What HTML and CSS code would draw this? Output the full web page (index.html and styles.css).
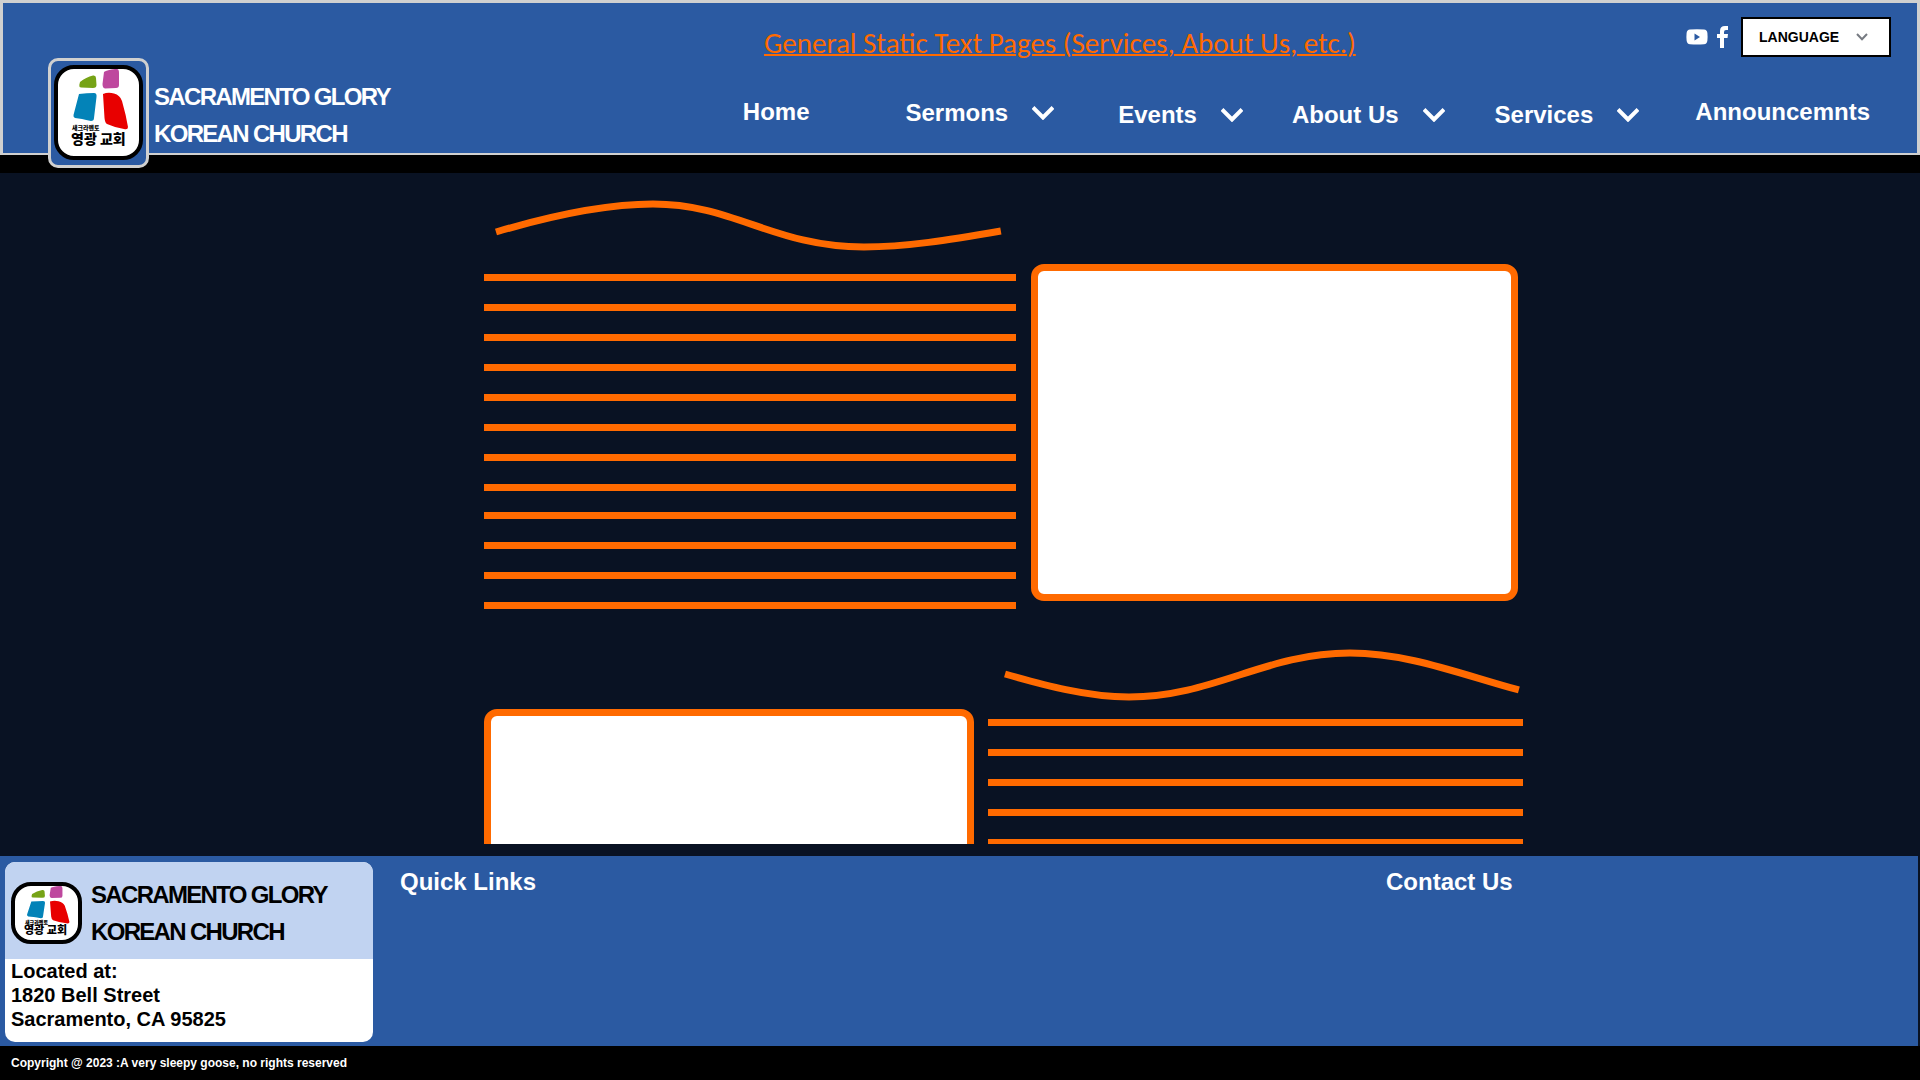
FILE: index.html
```html
<!DOCTYPE html>
<html lang="en">
<head>
<meta charset="utf-8">
<title>Sacramento Glory Korean Church</title>
<link rel="stylesheet" href="styles.css">
</head>
<body>
<svg class="defs" aria-hidden="true">
  <symbol id="cross" viewBox="0 0 81 87" preserveAspectRatio="none">
    <path fill="#76a316" d="M22 13Q28 8 35 6.500Q38 6 38 9L38.500 16Q38.500 19 35 19L23 18.500Q21 18.500 21.300 16Z"/>
    <path fill="#be489e" d="M46 3Q49 1 57 0L59 0Q61 0 61 4V16Q61 19 58 19L47 19.500Q44.500 19 44.500 15Z"/>
    <path fill="#0383b8" d="M21 25Q29 24 36 24Q39 24 38.500 28L36 49Q36 52 33 52Q28 51 24 50L17 49Q15 48 15.500 46Z"/>
    <path fill="#e80000" d="M45 25Q50 23 56 24.500Q62 26 64 32Q68 46 70 58Q70 61 66 60Q58 59 49 55Q47 54 46.500 49Z"/>
  </symbol>
</svg>

<header class="header">
  <a class="logo" href="#" aria-label="Sacramento Glory Korean Church home">
    <span class="logo-tile">
      <svg class="logo-art" viewBox="0 0 81 87">
        <use href="#cross" width="81" height="87"/>
        <text class="logo-small" x="14" y="61">새크라멘토</text>
        <text class="logo-name" x="13" y="75">영광 교회</text>
      </svg>
    </span>
  </a>
  <p class="brand">SACRAMENTO GLORY<br>KOREAN CHURCH</p>
  <div class="header-main">
    <div class="topbar">
      <a class="page-title" href="#">General Static Text Pages (Services, About Us, etc.)</a>
      <div class="tools">
        <a href="#" aria-label="YouTube"><svg width="22" height="16" viewBox="0 0 22 16"><path fill="#fff" d="M4 .6Q11 0 18 .6Q21 1 21.400 4Q21.800 8 21.400 11.500Q21 15 18 15.200Q11 15.800 4 15.200Q1 15 .6 11.500Q.2 8 .6 4Q1 1 4 .6Z"/><path fill="#2b5aa2" d="M8.500 4.500V11.500L14 8Z"/></svg></a>
        <a href="#" aria-label="Facebook"><svg width="12" height="22" viewBox="0 0 12 22"><path fill="#fff" d="M3 22V12H0V8H3V5Q3 0 8 0H11V4H9Q7 4 7 6V8H11L10.500 12H7V22Z"/></svg></a>
        <div class="language">
          <select aria-label="Language"><option>LANGUAGE</option></select>
          <svg class="language-arrow" width="12" height="8" viewBox="0 0 12 8"><path d="M1 1L6 6.200L11 1"/></svg>
        </div>
      </div>
    </div>
    <nav class="nav">
      <a href="#">Home</a>
      <button class="sermons" type="button">Sermons <svg class="chevron" viewBox="0 0 22 14"><path d="M1 1.500L11 11.500L21 1.500"/></svg></button>
      <button class="events" type="button">Events <svg class="chevron" viewBox="0 0 22 14"><path d="M1 1.500L11 11.500L21 1.500"/></svg></button>
      <button type="button">About Us <svg class="chevron" viewBox="0 0 22 14"><path d="M1 1.500L11 11.500L21 1.500"/></svg></button>
      <button type="button">Services <svg class="chevron" viewBox="0 0 22 14"><path d="M1 1.500L11 11.500L21 1.500"/></svg></button>
      <a href="#">Announcemnts</a>
    </nav>
  </div>
</header>

<main class="main">
  <section class="row">
    <div class="copy">
      <svg class="wave" viewBox="0 0 532 60"><path d="M12 35C66 19 121 7 169 7C250 7 290 50 380 50C422 50 465 43 517 34"/></svg>
      <div class="lines"><hr><hr><hr><hr><hr><hr><hr><hr></div>
      <div class="lines"><hr><hr><hr><hr></div>
    </div>
    <div class="photo"></div>
  </section>
  <section class="row row-second">
    <div class="photo"></div>
    <div class="copy">
      <svg class="wave" viewBox="0 0 535 60"><path d="M17 29C56 40 99 52 141 52C226 52 277 8 362 8C420 8 472 29 531 45"/></svg>
      <div class="lines"><hr><hr><hr><hr><hr><hr><hr><hr></div>
    </div>
  </section>
</main>

<footer class="footer">
  <div class="card">
    <div class="card-head">
      <span class="logo-tile">
        <svg class="logo-art" viewBox="0 0 63 54">
          <use href="#cross" width="63" height="54"/>
          <text class="logo-small" x="10" y="38">새크라멘토</text>
          <text class="logo-name" x="9" y="48">영광 교회</text>
        </svg>
      </span>
      <p class="brand">SACRAMENTO GLORY<br>KOREAN CHURCH</p>
    </div>
    <address>Located at:<br>1820 Bell Street<br>Sacramento, CA 95825</address>
  </div>
  <h2>Quick Links</h2>
  <h2>Contact Us</h2>
</footer>
<p class="copyright">Copyright @ 2023 :A very sleepy goose, no rights reserved</p>
</body>
</html>
```
FILE: styles.css
```css
* { box-sizing: border-box; }

body {
  margin: 0;
  height: 100vh;
  display: flex;
  flex-direction: column;
  overflow: hidden;
  background: #091223;
  color: #fff;
  font-family: "Liberation Sans", Arial, sans-serif;
  font-weight: bold;
}

a { color: inherit; text-decoration: none; }
p, h2 { margin: 0; }
svg { display: block; }
.defs { position: absolute; width: 0; height: 0; }

.header {
  display: flex;
  background: #2b5aa2;
  border: 3px solid #d0d0d0;
  border-bottom-width: 2px;
  box-shadow: 0 18px #000;
  margin-bottom: 18px;
  height: 155px;
  padding-left: 45px;
  flex: none;
}

.logo {
  flex: none;
  width: 101px;
  height: 110px;
  margin-top: 55px;
  padding: 4px 3px;
  border: 3px solid #d0d0d0;
  border-radius: 10px;
  background: #2b5aa2;
}
.logo-tile {
  display: block;
  flex: none;
  width: 89px;
  height: 95px;
  border: 4px solid #000;
  border-radius: 20px;
  background: #fff;
  overflow: hidden;
}
.logo-art {
  width: 100%;
  height: 100%;
  font-family: "Noto Sans CJK KR", sans-serif;
  font-weight: 900;
}
.logo-small { font-size: 6px; }
.logo-name { font-size: 14px; }

.brand {
  font-size: 24px;
  line-height: 37px;
  letter-spacing: -0.07em;
  white-space: nowrap;
}
.header .brand { margin: 75px 0 0 5px; width: 242px; }

.header-main { flex: 1; min-width: 0; }
.topbar {
  display: flex;
  justify-content: flex-end;
  height: 78px;
  padding: 14px 26px 0 0;
}
.page-title {
  margin: 8px auto 0 368px;
  color: #ff6a00;
  font: 400 29px/36px Carlito, Calibri, Lato, sans-serif;
  text-decoration: underline;
  text-decoration-thickness: 2px;
  white-space: nowrap;
}
.tools {
  display: flex;
  align-items: center;
  align-self: flex-start;
  gap: 9px;
}
.language { position: relative; margin-left: 3px; }
.language select {
  appearance: none;
  display: block;
  width: 150px;
  height: 40px;
  padding: 0 16px;
  border: 2px solid #000;
  border-radius: 0;
  background: #fff;
  color: #000;
  font: bold 14px "Liberation Sans", Arial, sans-serif;
}
.language-arrow {
  position: absolute;
  right: 23px;
  top: 16px;
  pointer-events: none;
}
.language-arrow path { fill: none; stroke: #777b82; stroke-width: 2; }

.nav {
  display: flex;
  justify-content: flex-end;
  gap: 50px;
  padding-right: 47px;
  font-size: 24px;
  line-height: 28px;
  padding-top: 17px;
}
.nav a { height: 28px; }
.nav a:last-child { margin-left: 6px; }
.nav button {
  display: flex;
  align-items: center;
  gap: 24px;
  height: 28px;
  margin-top: 3px;
  padding: 0;
  border: 0;
  background: none;
  color: inherit;
  font: inherit;
}
.nav .sermons { margin: 1px 0 0 46px; }
.nav .events { margin-left: 14px; margin-right: -1px; }
.chevron { width: 22px; height: 14px; }
.chevron path { fill: none; stroke: #fff; stroke-width: 4; }

.main {
  flex: 1;
  min-height: 0;
  overflow: hidden;
  margin-bottom: 12px;
  padding: 24px 20.7% 0 25.2%;
}
.row {
  display: grid;
  grid-template-columns: 532fr 492fr;
  gap: 15px;
}
.row-second {
  grid-template-columns: 490fr 535fr;
  gap: 14px;
  margin-top: 36px;
}
.photo {
  height: 337px;
  margin: 67px 5px 0 0;
  border: 7px solid #ff6a00;
  border-radius: 13px;
  background: #fff;
}
.row-second .photo { margin: 64px 0 0; }
.wave { width: 100%; height: 60px; overflow: visible; }
.wave path { fill: none; stroke: #ff6a00; stroke-width: 7; }
.lines {
  display: flex;
  flex-direction: column;
  gap: 23px;
  padding-top: 17px;
}
.lines + .lines { padding-top: 21px; }
.row-second .lines { padding-top: 14px; }
.lines hr {
  width: 100%;
  height: 7px;
  margin: 0;
  border: 0;
  background: #ff6a00;
}

.footer {
  flex: none;
  display: grid;
  grid-template-columns: 368px 959px 1fr;
  gap: 27px;
  margin-right: 2px;
  padding: 6px 5px 4px;
  background: #2b5aa2;
}
.footer h2 {
  padding-top: 6px;
  font-size: 24px;
  line-height: 28px;
}
.card {
  height: 180px;
  border-radius: 10px;
  overflow: hidden;
  background: #fff;
  color: #000;
}
.card-head {
  display: flex;
  gap: 9px;
  height: 97px;
  padding: 14px 6px 0;
  background: #c1d3f1;
}
.card .logo-tile { width: 71px; height: 62px; margin-top: 6px; }
.card .logo-small { font-size: 5px; }
.card .logo-name { font-size: 11px; }
.card address {
  padding: 0 6px;
  font-size: 20px;
  font-style: normal;
  line-height: 24px;
}
.copyright {
  flex: none;
  height: 34px;
  padding-left: 11px;
  background: #000;
  font-size: 12px;
  line-height: 34px;
}
```
